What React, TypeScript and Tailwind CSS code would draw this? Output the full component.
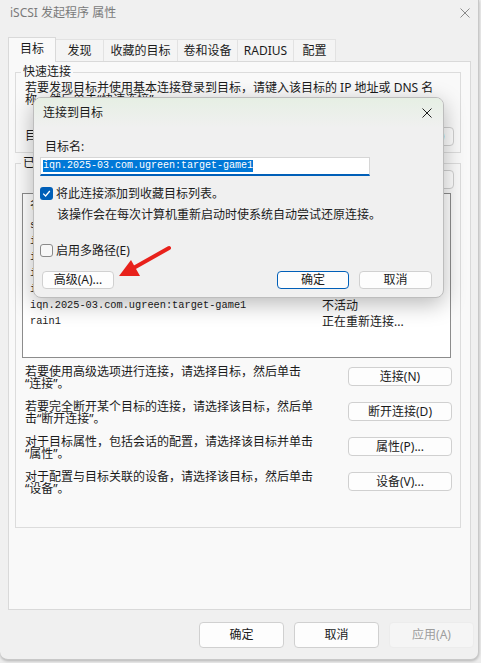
import clsx from "clsx";

const ui = "font-['Noto_Sans','Noto_Sans_CJK_SC',sans-serif]";
const mono = "font-['Liberation_Mono','Noto_Sans_CJK_SC',monospace]";

const tabs = [
  { label: "目标", w: "w-[48px]" },
  { label: "发现", w: "w-[48px]" },
  { label: "收藏的目标", w: "w-[74px]" },
  { label: "卷和设备", w: "w-[60px]" },
  { label: "RADIUS", w: "w-[56px]" },
  { label: "配置", w: "w-[42px]" },
];

const targets = [
  { name: "synology-nas:target-1", status: "已连接" },
  { name: "iqn.2025-03.com.ugreen:target-data", status: "不活动" },
  { name: "iqn.2025-03.com.ugreen:target-backup", status: "不活动" },
  { name: "iqn.2025-03.com.ugreen:target-media", status: "不活动" },
  { name: "iqn.2025-03.com.ugreen:target-game2", status: "不活动" },
  { name: "iqn.2025-03.com.ugreen:target-game1", status: "不活动" },
  { name: "rain1", status: "正在重新连接..." },
];

const actions = [
  { lines: ["若要使用高级选项进行连接，请选择目标，然后单击", "“连接”。"], btn: "连接(N)" },
  { lines: ["若要完全断开某个目标的连接，请选择该目标，然后单", "击“断开连接”。"], btn: "断开连接(D)" },
  { lines: ["对于目标属性，包括会话的配置，请选择该目标并单击", "“属性”。"], btn: "属性(P)..." },
  { lines: ["对于配置与目标关联的设备，请选择该目标，然后单击", "“设备”。"], btn: "设备(V)..." },
];

function Btn({ children, className }: { children: React.ReactNode; className?: string }) {
  return (
    <button
      type="button"
      className={clsx(
        "flex items-center justify-center rounded-[4px] border text-[12px] leading-none text-[#1b1b1b]",
        className
      )}
    >
      {children}
    </button>
  );
}

function CloseX({ size, color }: { size: number; color: string }) {
  return (
    <svg width={size} height={size} viewBox="0 0 10 10">
      <path d="M0.5 0.5 L9.5 9.5 M9.5 0.5 L0.5 9.5" stroke={color} strokeWidth="1" />
    </svg>
  );
}

export default function App() {
  return (
    <div className={clsx("relative w-[481px] h-[663px] overflow-hidden bg-[#ececec]", ui)}>
      {/* main window */}
      <div className="w-[479px] h-[660px] bg-[#f0f0f0] rounded-b-[8px] border-r border-b border-[#c8c8c8] shadow-[0_1px_3px_rgba(0,0,0,0.25)] flex flex-col">
        <div className="h-[26px] flex items-center justify-between pl-[10px] pr-[8px]">
          <span className="text-[12px] text-[#7a7a7a]">iSCSI 发起程序 属性</span>
          <CloseX size={10} color="#8a8a8a" />
        </div>

        <div className="mt-[11px] h-[24px] pl-[8px] flex items-end">
          {tabs.map((t, i) =>
            i === 0 ? (
              <div
                key={t.label}
                className={clsx(
                  "relative z-10 -mb-px h-[25px] flex items-center justify-center border border-b-0 border-[#d9d9d9] bg-[#f9f9f9] text-[12px] text-[#1b1b1b] pb-[2px]",
                  t.w
                )}
              >
                {t.label}
              </div>
            ) : (
              <div
                key={t.label}
                className={clsx(
                  "h-[22px] flex items-center justify-center border-t border-r border-[#e2e2e2] bg-[#f4f4f4] text-[12px] text-[#1b1b1b]",
                  t.w
                )}
              >
                {t.label}
              </div>
            )
          )}
        </div>

        <div className="ml-[8px] w-[463px] h-[549px] border border-[#d9d9d9] bg-[#f9f9f9] pl-[6px] pt-[3px] text-[12px] text-[#1b1b1b]">
          <fieldset className="w-[446px] h-[88px] border border-[#dcdcdc] pl-[9px] pr-[6px] pt-[3px]">
            <legend className="-ml-[4px] px-[2px] leading-[14px]">快速连接</legend>
            <div className="leading-[12px]">
              <div>若要发现目标并使用基本连接登录到目标，请键入该目标的 IP 地址或 DNS 名</div>
              <div>称，然后单击“快速连接”。</div>
            </div>
            <div className="mt-[20px] h-[20px] flex items-center gap-[8px]">
              <span>目标(T):</span>
              <div className="flex-1 h-[20px] border border-[#c8c8c8] bg-white" />
              <Btn className="w-[84px] h-[19px] border-[#d0d0d0] bg-[#fdfdfd]">快速连接(Q)</Btn>
            </div>
          </fieldset>

          <fieldset className="mt-[3px] w-[446px] h-[372px] border border-[#dcdcdc] pl-[6px] pr-[6px]">
            <legend className="-ml-[1px] px-[2px] leading-[14px]">已发现的目标(G)</legend>
            <div className="flex justify-end">
              <Btn className="w-[84px] h-[19px] border-[#d0d0d0] bg-[#fdfdfd]">刷新(R)</Btn>
            </div>
            <div className={clsx("mt-[4px] w-[429px] h-[165px] border border-[#8c8c8c] bg-white text-[10.3px]", mono)}>
              <div className="h-[22px] flex items-center pl-[7px]">
                <span className={clsx("w-[292px] text-[12px]", ui)}>名称</span>
                <span className={clsx("text-[12px]", ui)}>状态</span>
              </div>
              <div className="mt-[2px]">
                {targets.map((t) => (
                  <div key={t.name} className="h-[16px] flex items-center pl-[7px]">
                    <span className="w-[292px] whitespace-nowrap">{t.name}</span>
                    <span className={clsx("text-[12px]", ui)}>{t.status}</span>
                  </div>
                ))}
              </div>
            </div>
            <div className="mt-[8px] flex flex-col gap-[11px]">
              {actions.map((a) => (
                <div key={a.btn} className="h-[24px] flex justify-between">
                  <div className="pl-[3px] leading-[12px]">
                    {a.lines.map((l) => (
                      <div key={l}>{l}</div>
                    ))}
                  </div>
                  <Btn className="mt-[1px] mr-[2px] w-[104px] h-[19px] border-[#d0d0d0] bg-[#fdfdfd]">{a.btn}</Btn>
                </div>
              ))}
            </div>
          </fieldset>
        </div>

        <div className="mt-[12px] flex justify-end gap-[10px] pr-[4px]">
          <Btn className="w-[85px] h-[26px] border-[#d0d0d0] bg-[#fdfdfd]">确定</Btn>
          <Btn className="w-[85px] h-[26px] border-[#d0d0d0] bg-[#fdfdfd]">取消</Btn>
          <Btn className="w-[85px] h-[26px] border-[#ececec] bg-[#f5f5f5] !text-[#9d9d9d]">应用(A)</Btn>
        </div>
      </div>

      {/* modal dialog */}
      <div className="absolute left-[33px] top-[97px] w-[411px] h-[201px] rounded-[8px] border border-[#bdbdbd] bg-[#f0f0f0] shadow-[0_6px_22px_rgba(0,0,0,0.28)] overflow-hidden flex flex-col text-[12px] text-[#1b1b1b]">
        <div className="h-[30px] flex items-center justify-between pl-[9px] pr-[11px] bg-gradient-to-b from-[#e6efe4] to-[#f0f0f0]">
          <span>连接到目标</span>
          <CloseX size={10} color="#1f1f1f" />
        </div>
        <div className="pl-[11px] pt-[12px] leading-[14px]">目标名:</div>
        <div className="ml-[6px] mt-[3px] w-[330px] h-[19px] border border-[#d6d6d6] border-b-2 border-b-[#005fb8] bg-white flex items-center pl-[2px]">
          <span className={clsx("bg-[#0078d7] text-white text-[10px] leading-[12px]", mono)}>
            iqn.2025-03.com.ugreen:target-game1
          </span>
        </div>
        <div className="ml-[6px] mt-[11px] h-[13px] flex items-center gap-[3px]">
          <div className="w-[13px] h-[13px] rounded-[3px] bg-[#005fb8] flex items-center justify-center">
            <svg width="9" height="9" viewBox="0 0 9 9">
              <path d="M1.2 4.6 L3.6 7 L7.8 2" stroke="#fff" strokeWidth="1.3" fill="none" />
            </svg>
          </div>
          <span>将此连接添加到收藏目标列表。</span>
        </div>
        <div className="pl-[23px] mt-[8px] leading-[14px]">该操作会在每次计算机重新启动时使系统自动尝试还原连接。</div>
        <div className="ml-[6px] mt-[22px] h-[13px] flex items-center gap-[3px]">
          <div className="w-[13px] h-[13px] rounded-[3px] border border-[#8a8a8a] bg-[#f7f7f7]" />
          <span>启用多路径(E)</span>
        </div>
        <div className="mt-[14px] pl-[8px] pr-[11px] flex justify-between">
          <Btn className="w-[72px] h-[18px] border-[#d0d0d0] bg-[#fdfdfd]">高级(A)...</Btn>
          <div className="flex gap-[10px]">
            <Btn className="w-[72px] h-[18px] border-[#005fb8] bg-[#fdfdfd]">确定</Btn>
            <Btn className="w-[73px] h-[18px] border-[#d0d0d0] bg-[#fdfdfd]">取消</Btn>
          </div>
        </div>
      </div>

      {/* red annotation arrow */}
      <svg className="absolute left-0 top-0 pointer-events-none" width="481" height="663" viewBox="0 0 481 663">
        <path d="M169 248 L130 270" stroke="#e8211b" strokeWidth="4" strokeLinecap="round" />
        <path d="M119 276 L131 260 L140 276 Z" fill="#e8211b" />
      </svg>
    </div>
  );
}
